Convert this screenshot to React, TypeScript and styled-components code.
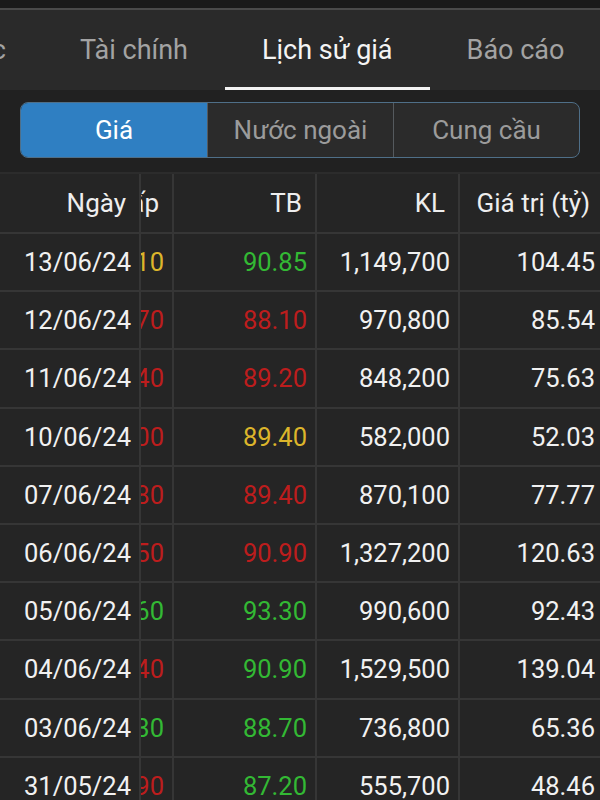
import React from 'react'
import styled, { createGlobalStyle } from 'styled-components'

const GlobalStyle = createGlobalStyle`
  html, body {
    margin: 0;
    padding: 0;
    background: #212121;
    font-family: Roboto, 'Noto Sans', 'Liberation Sans', sans-serif;
  }
  #root {
    height: 800px;
    overflow: hidden;
  }
`

const Screen = styled.div`
  width: 600px;
  height: 800px;
  display: flex;
  flex-direction: column;
  overflow: hidden;
  background: #212121;
`

const StatusStrip = styled.div`
  height: 8px;
  flex-shrink: 0;
  background: #1a1a1a;
  border-bottom: 2px solid #4a4a4a;
`

const TabBar = styled.div`
  height: 80px;
  flex-shrink: 0;
  background: #2a2a2a;
  overflow: hidden;
  display: flex;
`

// tabs are scrolled, the first one only shows its last letter
const TabStrip = styled.div`
  display: flex;
  margin-left: -115px;
  flex-shrink: 0;
`

const Tab = styled.div<{ $active?: boolean }>`
  height: 80px;
  padding: 3px 37px 0 37px;
  box-sizing: border-box;
  display: flex;
  align-items: center;
  font-size: 27px;
  white-space: nowrap;
  color: ${(p) => (p.$active ? '#f4f4f4' : '#a3a3a3')};
  border-bottom: 3px solid ${(p) => (p.$active ? '#f2f2f2' : 'transparent')};
`

const SegmentWrap = styled.div`
  flex-shrink: 0;
  padding: 12px 20px 14px 20px;
`

const Segmented = styled.div`
  display: grid;
  grid-template-columns: repeat(3, 1fr);
  height: 56px;
  box-sizing: border-box;
  border: 1.5px solid #4f6f88;
  border-radius: 8px;
  overflow: hidden;
  background: #2b2b2b;
`

const Segment = styled.div<{ $active?: boolean }>`
  display: flex;
  align-items: center;
  justify-content: center;
  font-size: 26px;
  color: ${(p) => (p.$active ? '#ffffff' : '#9b9b9b')};
  background: ${(p) => (p.$active ? '#2f7fc2' : 'transparent')};
  & + & {
    border-left: 1.5px solid #555a5e;
  }
`

const Table = styled.div`
  flex: 1;
  min-height: 0;
  display: flex;
  align-items: flex-start;
  overflow: hidden;
  border-top: 2px solid #2c2c2c;
`

const FrozenCol = styled.div`
  width: 141px;
  flex-shrink: 0;
  display: flex;
  flex-direction: column;
  background: #252525;
  border-right: 2px solid #363636;
  box-sizing: border-box;
`

const Viewport = styled.div`
  flex: 1;
  overflow: hidden;
  display: flex;
`

// horizontally scrolled columns, "Thấp" sits mostly under the date column
const Columns = styled.div`
  display: flex;
  margin-left: -110px;
  flex-shrink: 0;
`

const Col = styled.div`
  width: 143px;
  display: flex;
  flex-direction: column;
  border-right: 2px solid #363636;
  box-sizing: border-box;
  background: #252525;

  &:last-child {
    border-right: none;
  }
`

const HeadCell = styled.div`
  height: 60px;
  flex-shrink: 0;
  box-sizing: border-box;
  border-bottom: 2px solid #363636;
  display: flex;
  align-items: center;
  justify-content: flex-end;
  padding-right: 13px;
  font-size: 26px;
  color: #eeeeee;
  white-space: nowrap;
`

const Cell = styled.div<{ $tone?: 'up' | 'down' | 'ref' }>`
  height: 58.2px;
  flex-shrink: 0;
  box-sizing: border-box;
  border-bottom: 2px solid #363636;
  display: flex;
  align-items: center;
  justify-content: flex-end;
  padding-right: 8px;
  font-size: 25.5px;
  white-space: nowrap;
  color: ${(p) =>
    p.$tone === 'up' ? '#33b934' : p.$tone === 'down' ? '#bd1d1d' : p.$tone === 'ref' ? '#dcb52b' : '#f1f1f1'};
`

type Tone = 'up' | 'down' | 'ref'

type Row = {
  date: string
  low: [string, Tone]
  avg: [string, Tone]
  vol: string
  value: string
}

const rows: Row[] = [
  { date: '13/06/24', low: ['90.10', 'ref'], avg: ['90.85', 'up'], vol: '1,149,700', value: '104.45' },
  { date: '12/06/24', low: ['87.70', 'down'], avg: ['88.10', 'down'], vol: '970,800', value: '85.54' },
  { date: '11/06/24', low: ['88.40', 'down'], avg: ['89.20', 'down'], vol: '848,200', value: '75.63' },
  { date: '10/06/24', low: ['89.00', 'down'], avg: ['89.40', 'ref'], vol: '582,000', value: '52.03' },
  { date: '07/06/24', low: ['88.80', 'down'], avg: ['89.40', 'down'], vol: '870,100', value: '77.77' },
  { date: '06/06/24', low: ['89.50', 'down'], avg: ['90.90', 'down'], vol: '1,327,200', value: '120.63' },
  { date: '05/06/24', low: ['92.60', 'up'], avg: ['93.30', 'up'], vol: '990,600', value: '92.43' },
  { date: '04/06/24', low: ['88.40', 'down'], avg: ['90.90', 'up'], vol: '1,529,500', value: '139.04' },
  { date: '03/06/24', low: ['87.30', 'up'], avg: ['88.70', 'up'], vol: '736,800', value: '65.36' },
  { date: '31/05/24', low: ['86.90', 'down'], avg: ['87.20', 'up'], vol: '555,700', value: '48.46' },
]

const tabs = ['Tin tức', 'Tài chính', 'Lịch sử giá', 'Báo cáo', 'Sự kiện']

const App: React.FC = () => {
  return (
    <Screen>
      <GlobalStyle />
      <StatusStrip />
      <TabBar>
        <TabStrip>
          {tabs.map((t) => (
            <Tab key={t} $active={t === 'Lịch sử giá'}>
              {t}
            </Tab>
          ))}
        </TabStrip>
      </TabBar>

      <SegmentWrap>
        <Segmented>
          <Segment $active>Giá</Segment>
          <Segment>Nước ngoài</Segment>
          <Segment>Cung cầu</Segment>
        </Segmented>
      </SegmentWrap>

      <Table>
        <FrozenCol>
          <HeadCell>Ngày</HeadCell>
          {rows.map((r) => (
            <Cell key={r.date}>{r.date}</Cell>
          ))}
        </FrozenCol>
        <Viewport>
          <Columns>
            <Col>
              <HeadCell>Thấp</HeadCell>
              {rows.map((r) => (
                <Cell key={r.date} $tone={r.low[1]}>
                  {r.low[0]}
                </Cell>
              ))}
            </Col>
            <Col>
              <HeadCell>TB</HeadCell>
              {rows.map((r) => (
                <Cell key={r.date} $tone={r.avg[1]}>
                  {r.avg[0]}
                </Cell>
              ))}
            </Col>
            <Col>
              <HeadCell>KL</HeadCell>
              {rows.map((r) => (
                <Cell key={r.date}>{r.vol}</Cell>
              ))}
            </Col>
            <Col>
              <HeadCell>Giá trị (tỷ)</HeadCell>
              {rows.map((r) => (
                <Cell key={r.date}>{r.value}</Cell>
              ))}
            </Col>
          </Columns>
        </Viewport>
      </Table>
    </Screen>
  )
}

export default App
